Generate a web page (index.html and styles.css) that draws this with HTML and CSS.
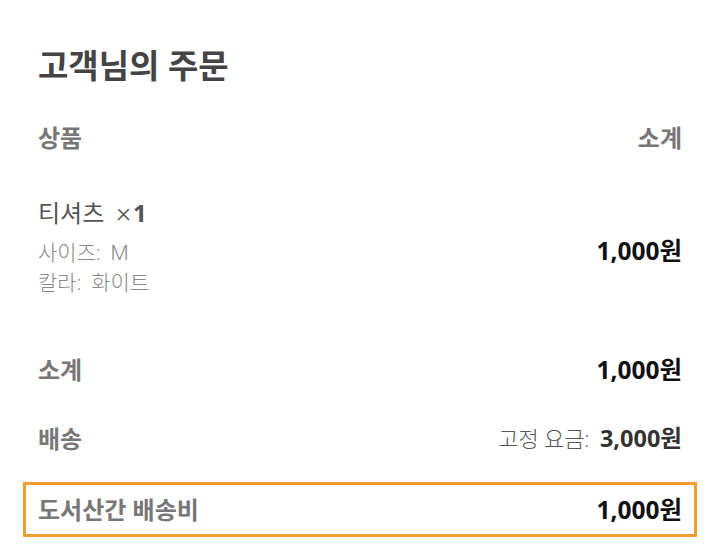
FILE: index.html
```html
<!DOCTYPE html>
<html lang="ko">
<head>
<meta charset="utf-8">
<link rel="stylesheet" href="styles.css">
</head>
<body>
<div class="order">
  <h1 class="title">고객님의 주문</h1>
  <div class="row head">
    <span class="label">상품</span>
    <span class="label">소계</span>
  </div>
  <div class="row item">
    <div class="item-info">
      <div class="item-name">티셔츠 <span class="qty"><span class="times">×</span><strong>1</strong></span></div>
      <div class="metas">
        <div class="meta">사이즈:&nbsp; M</div>
        <div class="meta">칼라:&nbsp; 화이트</div>
      </div>
    </div>
    <span class="price">1,000원</span>
  </div>
  <div class="row sum">
    <span class="label">소계</span>
    <span class="price">1,000원</span>
  </div>
  <div class="row ship">
    <span class="label">배송</span>
    <span class="ship-val">고정 요금:&nbsp; <strong class="price">3,000원</strong></span>
  </div>
  <div class="row extra">
    <span class="label">도서산간 배송비</span>
    <span class="price">1,000원</span>
  </div>
</div>
</body>
</html>
```

FILE: styles.css
```css
html, body {
  margin: 0;
  padding: 0;
  background: #fff;
}
body {
  font-family: "Open Sans", "Noto Sans CJK KR", sans-serif;
  color: #444;
}
.order {
  padding: 40px 46px 0 38px;
}
.title {
  margin: 0;
  font-size: 33px;
  font-weight: 700;
  color: #444;
  line-height: 52px;
}
.row {
  display: flex;
  justify-content: space-between;
  align-items: center;
}
.label {
  font-size: 24px;
  font-weight: 700;
  color: #777;
  line-height: 32px;
}
.head {
  margin-top: 26px;
  height: 40px;
}
.item {
  margin-top: 33px;
  align-items: flex-start;
}
.item-name {
  font-family: Roboto, "Noto Sans CJK KR", sans-serif;
  font-size: 24px;
  font-weight: 400;
  color: #555;
  line-height: 44px;
}
.qty {
  margin-left: 6px;
}
.times {
  font-weight: 300;
  font-size: 28px;
  margin-right: 2px;
}
.qty strong {
  font-family: "Open Sans", sans-serif;
  font-size: 24px;
  font-weight: 700;
  color: #555;
}
.metas {
  margin-top: 2px;
}
.meta {
  font-family: Roboto, "Noto Sans CJK KR", sans-serif;
  font-size: 21px;
  font-weight: 300;
  color: #888;
  line-height: 30px;
}
.price {
  font-size: 24.5px;
  font-weight: 700;
  color: #111;
  line-height: 32px;
}
.item .price {
  margin-top: 44px;
}
.sum {
  margin-top: 52px;
  height: 40px;
}
.ship {
  margin-top: 29px;
  height: 40px;
}
.ship-val {
  font-family: Roboto, "Noto Sans CJK KR", sans-serif;
  font-size: 22px;
  font-weight: 300;
  color: #555;
  line-height: 32px;
}
.ship-val .price {
  font-family: "Open Sans", "Noto Sans CJK KR", sans-serif;
  font-size: 23.5px;
  color: #333;
}
.extra {
  margin: 23px -15px 0 -15px;
  border: 3px solid #f39c33;
  padding: 0 12px;
  height: 49px;
}
```
